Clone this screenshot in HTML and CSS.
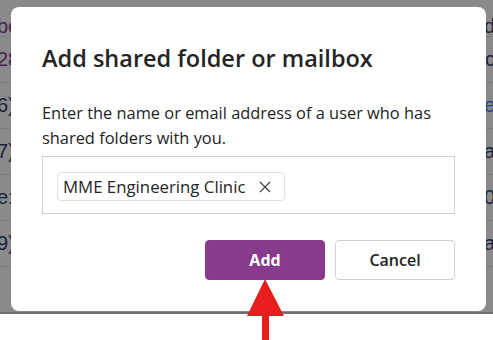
FILE: index.html
```html
<!DOCTYPE html>
<html>
<head>
<meta charset="utf-8">
<link rel="stylesheet" href="styles.css">
</head>
<body>
<div class="page">
  <div class="backdrop">
    <div class="row first"><span class="l purple">bo</span><span class="r">d</span></div>
    <div class="row"><span class="l purple">28</span><span class="r">c</span></div>
    <div class="row"><span class="l">6)</span><span class="r blue">e</span></div>
    <div class="row"><span class="l">7)</span><span class="r">ca</span></div>
    <div class="row"><span class="l">e:</span><span class="r">0</span></div>
    <div class="row"><span class="l">9)</span><span class="r">a</span></div>
  </div>

  <div class="dialog">
    <h1 class="title">Add shared folder or mailbox</h1>
    <p class="desc">Enter the name or email address of a user who has shared folders with you.</p>
    <div class="picker">
      <span class="chip">MME Engineering Clinic
        <svg class="chip-x" width="12" height="12" viewBox="0 0 12 12"><path d="M1 1 L11 11 M11 1 L1 11" stroke="#424242" stroke-width="1.2" fill="none"/></svg>
      </span>
    </div>
    <div class="actions">
      <button class="btn primary">Add</button>
      <button class="btn">Cancel</button>
    </div>
  </div>

  <svg class="arrow" width="40" height="62" viewBox="0 0 40 62"><polygon points="18,0 37,37 22,37 22,62 15,62 15,37 0,37" fill="#e81e1e"/></svg>
</div>
</body>
</html>
```
FILE: styles.css
```css
* { box-sizing: border-box; }
html, body { margin: 0; padding: 0; background: #fff; }
body { font-family: "Open Sans", "Noto Sans", sans-serif; }
.page { position: relative; width: 493px; height: 340px; overflow: hidden; }
.backdrop {
  height: 314px;
  background: #8a8a8a;
  border-bottom: 2px solid #6e6e6e;
  overflow: hidden;
}
.row {
  height: 46px;
  border-bottom: 1px solid #7c7c7c;
  display: flex;
  justify-content: space-between;
  align-items: center;
  font-size: 20px;
  color: #1e1e3a;
  font-family: "Liberation Sans", sans-serif;
}
.row.first { height: 37px; padding-top: 16px; }
.l { margin-left: -3px; }
.r { margin-right: -2px; }
.purple { color: #4a2150; }
.blue { color: #1f3f7a; }
.dialog {
  position: absolute;
  left: 11px; top: 7px;
  width: 475px; height: 304px;
  background: #fff;
  border-radius: 8px;
  padding: 35px 31px 31px;
  display: flex;
  flex-direction: column;
}
.title {
  margin: 0;
  font-size: 23.5px;
  line-height: 32px;
  font-weight: 600;
  color: #242424;
}
.desc {
  margin: 26px 0 0;
  font-size: 16.4px;
  line-height: 25px;
  color: #242424;
}
.picker {
  margin-top: 6px;
  height: 58px;
  border: 1px solid #d1d1d1;
  padding: 15px 14px;
  display: flex;
  align-items: flex-start;
}
.chip {
  display: inline-flex;
  align-items: center;
  height: 29px;
  padding: 0 13px 0 5px;
  border: 1px solid #e0e0e0;
  border-radius: 4px;
  font-size: 16.8px;
  color: #242424;
  gap: 14px;
}
.actions {
  margin-top: auto;
  display: flex;
  justify-content: flex-end;
  gap: 10px;
}
.btn {
  width: 120px; height: 40px;
  border-radius: 4px;
  border: 1px solid #d1d1d1;
  background: #fff;
  font-family: inherit;
  font-size: 16px;
  font-weight: 600;
  color: #242424;
}
.btn.primary {
  background: #883a8c;
  border-color: #883a8c;
  color: #fff;
  font-weight: 700;
}
.arrow { position: absolute; left: 247px; top: 279px; }
```
